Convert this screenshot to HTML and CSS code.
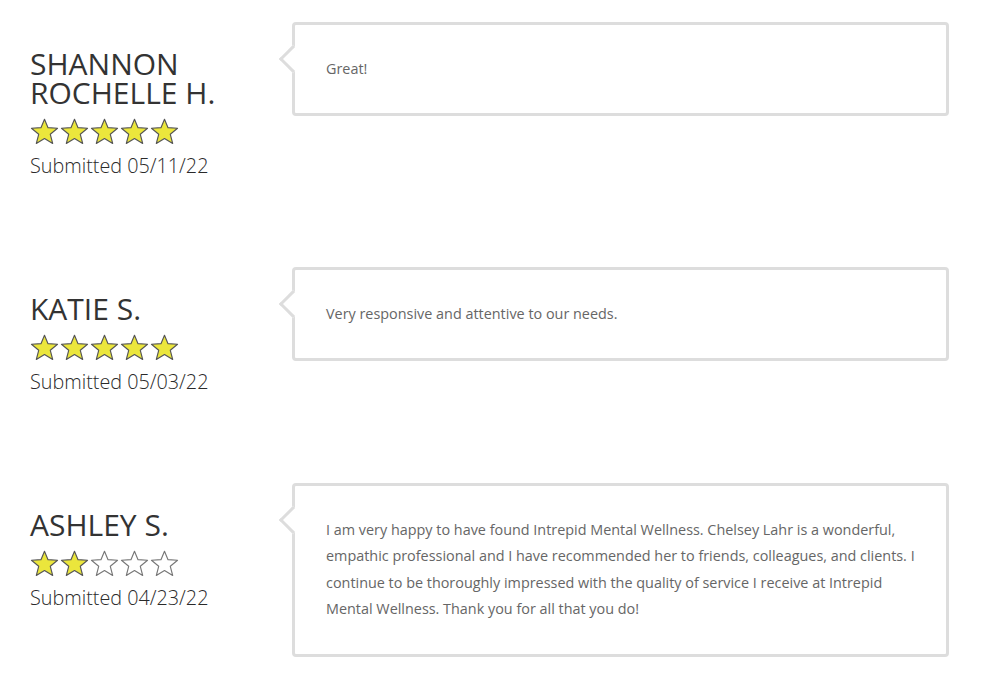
FILE: index.html
```html
<!DOCTYPE html>
<html>
<head>
<meta charset="utf-8">
<link rel="stylesheet" href="styles.css">
</head>
<body>
<svg width="0" height="0" class="defs">
  <defs>
    <symbol id="star" viewBox="0 0 28 26">
      <polygon points="14,1.2 17.4,9.3 26.6,9.9 19.6,15.7 21.9,24.6 14,19.8 6.1,24.6 8.4,15.7 1.4,9.9 10.6,9.3" />
    </symbol>
  </defs>
</svg>
<div class="reviews">
  <div class="review">
    <div class="author">
      <div class="name">SHANNON ROCHELLE H.</div>
      <div class="stars">
        <svg class="star on"><use href="#star"/></svg><svg class="star on"><use href="#star"/></svg><svg class="star on"><use href="#star"/></svg><svg class="star on"><use href="#star"/></svg><svg class="star on"><use href="#star"/></svg>
      </div>
      <div class="date">Submitted 05/11/22</div>
    </div>
    <div class="bubble"><p>Great!</p></div>
  </div>
  <div class="review">
    <div class="author">
      <div class="name">KATIE S.</div>
      <div class="stars">
        <svg class="star on"><use href="#star"/></svg><svg class="star on"><use href="#star"/></svg><svg class="star on"><use href="#star"/></svg><svg class="star on"><use href="#star"/></svg><svg class="star on"><use href="#star"/></svg>
      </div>
      <div class="date">Submitted 05/03/22</div>
    </div>
    <div class="bubble"><p>Very responsive and attentive to our needs.</p></div>
  </div>
  <div class="review">
    <div class="author">
      <div class="name">ASHLEY S.</div>
      <div class="stars">
        <svg class="star on"><use href="#star"/></svg><svg class="star on"><use href="#star"/></svg><svg class="star off"><use href="#star"/></svg><svg class="star off"><use href="#star"/></svg><svg class="star off"><use href="#star"/></svg>
      </div>
      <div class="date">Submitted 04/23/22</div>
    </div>
    <div class="bubble"><p>I am very happy to have found Intrepid Mental Wellness. Chelsey Lahr is a wonderful, empathic professional and I have recommended her to friends, colleagues, and clients. I continue to be thoroughly impressed with the quality of service I receive at Intrepid Mental Wellness. Thank you for all that you do!</p></div>
  </div>
</div>
</body>
</html>
```
FILE: styles.css
```css
html, body {
  margin: 0;
  padding: 0;
  background: #fff;
}
body {
  font-family: "Open Sans", "Liberation Sans", sans-serif;
  color: #333;
}
.defs {
  position: absolute;
  width: 0;
  height: 0;
}
.reviews {
  padding: 22px 43px 0 30px;
}
.review {
  display: grid;
  grid-template-columns: 262px 1fr;
  align-items: start;
  margin-bottom: 87px;
}
.author {
  padding-top: 27px;
}
.name {
  font-size: 30px;
  line-height: 29px;
  font-weight: 400;
  color: #333;
  width: 210px;
}
.stars {
  display: flex;
  gap: 1px;
  margin-top: 11px;
  height: 27px;
}
.star {
  width: 29px;
  height: 27px;
  stroke: #555;
  stroke-width: 1.1;
  stroke-linejoin: round;
}
.star.on { fill: #ebe63c; }
.star.off { fill: #fff; stroke: #777; }
.date {
  margin-top: 7px;
  font-size: 19.8px;
  line-height: 28px;
  font-weight: 300;
  color: #2a2a2a;
}
.bubble {
  position: relative;
  border: 3px solid #ddd;
  border-radius: 4px;
  background: #fff;
  padding: 31px 30px 31px 31px;
}
.bubble::before {
  content: "";
  position: absolute;
  left: -12px;
  top: 24px;
  width: 17px;
  height: 17px;
  background: #fff;
  border-left: 3px solid #ddd;
  border-bottom: 3px solid #ddd;
  transform: rotate(45deg);
}
.bubble p {
  position: relative;
  margin: 0;
  font-size: 14.4px;
  line-height: 26.4px;
  font-weight: 400;
  color: #666;
}
```
